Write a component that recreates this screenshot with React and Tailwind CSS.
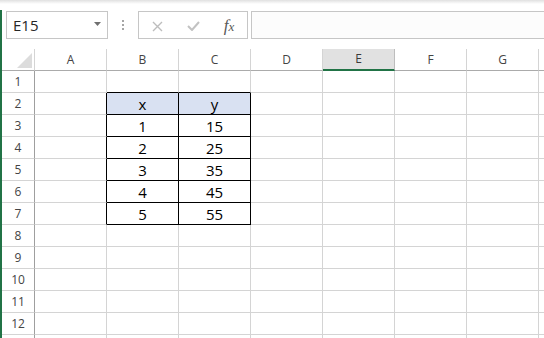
const COLS = ["A", "B", "C", "D", "E", "F", "G", "H"];
const ROWS = [1, 2, 3, 4, 5, 6, 7, 8, 9, 10, 11, 12, 13];

const DATA = {
  2: ["x", "y"],
  3: ["1", "15"],
  4: ["2", "25"],
  5: ["3", "35"],
  6: ["4", "45"],
  7: ["5", "55"],
};

const inTable = (r, c) => r >= 2 && r <= 7 && (c === "B" || c === "C");

const Cell = ({ r, c }) => {
  const table = inTable(r, c);
  const rightBlack = table || (c === "A" && r >= 2 && r <= 7);
  const bottomBlack = table || (r === 1 && (c === "B" || c === "C"));
  const text = table ? DATA[r][c === "B" ? 0 : 1] : "";
  const head = table && r === 2;

  return (
    <div
      className={[
        "w-[72px] shrink-0 h-full border-r border-b flex items-center justify-center pt-[1px] text-[15px] text-black",
        rightBlack ? "border-r-black" : "border-r-[#d4d4d4]",
        bottomBlack ? "border-b-black" : "border-b-[#d4d4d4]",
        head ? "bg-[#d9e1f2]" : "bg-white",
      ].join(" ")}
    >
      {text}
    </div>
  );
};

export default function App() {
  return (
    <div className="w-[544px] h-[338px] overflow-hidden flex bg-[linear-gradient(#e0e0e0,#ffffff_4px)] font-['Open_Sans','Noto_Sans',sans-serif]">
      {/* window edge */}
      <div className="w-[2px] shrink-0 mt-[10px] bg-[#217346]" />

      <div className="flex-1 flex flex-col min-w-0 overflow-hidden">
        {/* name box + formula bar */}
        <div className="h-[49px] shrink-0 flex items-start pt-[11px] pl-[4px]">
          <div className="w-[102px] h-[28px] shrink-0 border border-[#c6c6c6] bg-white flex items-center justify-between pl-[6px] pr-[6px]">
            <span className="text-[15px] text-[#262626] leading-none">E15</span>
            <svg width="7" height="4" viewBox="0 0 7 4" className="mb-[3px]">
              <polygon points="0,0 7,0 3.5,4" fill="#707070" />
            </svg>
          </div>

          <div className="ml-[14px] h-[28px] flex flex-col justify-center gap-[2px]">
            <div className="w-[2px] h-[2px] bg-[#a6a6a6]" />
            <div className="w-[2px] h-[2px] bg-[#a6a6a6]" />
            <div className="w-[2px] h-[2px] bg-[#a6a6a6]" />
          </div>

          <div className="ml-[14px] w-[110px] h-[28px] shrink-0 border border-[#c6c6c6] bg-white flex">
            <div className="w-[36px] flex items-center justify-center pt-[2px]">
              <svg width="11" height="11" viewBox="0 0 11 11">
                <path d="M1 1 L10 10 M10 1 L1 10" stroke="#bdbdbd" strokeWidth="1.4" fill="none" />
              </svg>
            </div>
            <div className="w-[36px] flex items-center justify-center pt-[2px]">
              <svg width="13" height="10" viewBox="0 0 13 10">
                <path d="M1 5 L5 9 L12 1" stroke="#c2c2c2" strokeWidth="2" fill="none" />
              </svg>
            </div>
            <div className="w-[36px] flex items-center justify-center pt-[1px]">
              <span className="italic font-['Liberation_Serif',serif] text-[17px] text-[#595959] leading-none">
                f<span className="text-[13px]">x</span>
              </span>
            </div>
          </div>

          <div className="ml-[3px] flex-1 h-[28px] border-y border-l border-[#c6c6c6] bg-[#fcfcfc]" />
        </div>

        {/* column headers */}
        <div className="flex h-[22px] shrink-0">
          <div className="w-[33px] shrink-0 h-full border-r border-b border-r-[#d4d4d4] border-b-[#ababab] flex items-end justify-end pr-[2px] pb-[2px]">
            <svg width="15" height="15" viewBox="0 0 15 15">
              <polygon points="15,0 15,15 0,15" fill="#dcdcdc" />
            </svg>
          </div>
          {COLS.map((c) =>
            c === "E" ? (
              <div
                key={c}
                className="w-[72px] shrink-0 h-full bg-[#e1e1e1] border-r border-r-[#bdbdbd] border-b-2 border-b-[#217346] flex items-center justify-center text-[12px] text-[#3a3a3a]"
              >
                {c}
              </div>
            ) : (
              <div
                key={c}
                className="w-[72px] shrink-0 h-full border-r border-b border-r-[#d4d4d4] border-b-[#ababab] flex items-center justify-center text-[12px] text-[#444444]"
              >
                {c === "H" ? "" : c}
              </div>
            )
          )}
        </div>

        {/* rows */}
        {ROWS.map((r) => (
          <div key={r} className="flex h-[22px] shrink-0">
            <div className="w-[33px] shrink-0 h-full border-r border-b border-r-[#9f9f9f] border-b-[#d4d4d4] flex items-center justify-center pt-[1px] text-[12px] text-[#444444]">
              {r === 13 ? "" : r}
            </div>
            {COLS.map((c) => (
              <Cell key={c} r={r} c={c} />
            ))}
          </div>
        ))}
      </div>
    </div>
  );
}
